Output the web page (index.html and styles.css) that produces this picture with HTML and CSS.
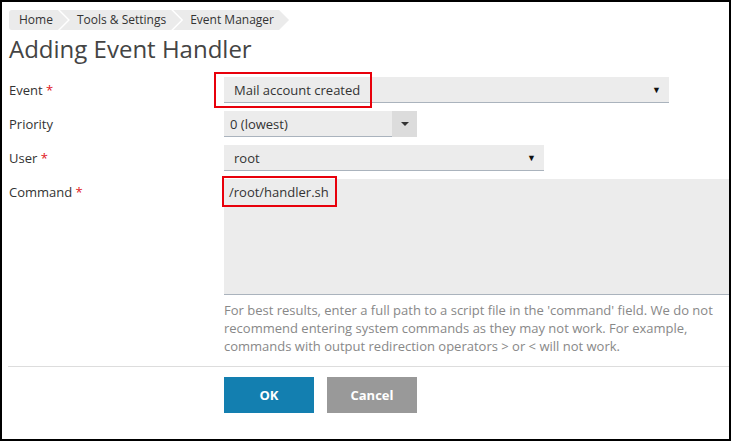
FILE: index.html
```html
<!DOCTYPE html>
<html lang="en">
<head>
  <meta charset="UTF-8">
  <title>Adding Event Handler</title>
  <link rel="stylesheet" href="styles.css">
</head>
<body>
  <div class="page">
    <!-- Breadcrumbs -->
    <ul class="crumbs">
      <li class="crumb">Home</li>
      <li class="crumb">Tools &amp; Settings</li>
      <li class="crumb">Event Manager</li>
    </ul>

    <h1 class="title">Adding Event Handler</h1>

    <form class="form">
      <div class="row">
        <div class="label">Event <span class="req">*</span></div>
        <div class="select select-event">
          <span>Mail account created</span>
          <span class="arrow">&#9660;</span>
          <span class="mark mark-event"></span>
        </div>
      </div>

      <div class="row">
        <div class="label">Priority</div>
        <div class="select select-priority">
          <span>0 (lowest)</span>
          <span class="drop"><span class="caret"></span></span>
        </div>
      </div>

      <div class="row">
        <div class="label">User <span class="req">*</span></div>
        <div class="select select-user">
          <span>root</span>
          <span class="arrow">&#9660;</span>
        </div>
      </div>

      <div class="row">
        <div class="label">Command <span class="req">*</span></div>
        <div class="field">
          <div class="textarea">
            /root/handler.sh
            <span class="mark mark-command"></span>
          </div>
          <p class="hint">For best results, enter a full path to a script file in the 'command' field. We do not recommend entering system commands as they may not work. For example, commands with output redirection operators &gt; or &lt; will not work.</p>
        </div>
      </div>

      <div class="buttons">
        <button type="button" class="btn btn-ok">OK</button>
        <button type="button" class="btn btn-cancel">Cancel</button>
      </div>
    </form>
  </div>
</body>
</html>
```

FILE: styles.css
```css
html {
  font-family: "Open Sans", "Liberation Sans", sans-serif;
  font-size: 13px;
  color: #333;
}
body {
  margin: 0;
}
.page {
  width: 731px;
  height: 441px;
  box-sizing: border-box;
  border: 2px solid #000;
  padding: 8px 0 0 7px;
  overflow: hidden;
  background: #fff;
}

/* Breadcrumbs */
.crumbs {
  display: flex;
  list-style: none;
  margin: 0;
  padding: 0;
  height: 20px;
  font-size: 12px;
}
.crumb {
  height: 20px;
  line-height: 20px;
  background: #ebebeb;
  color: #333;
  padding: 0 15px 0 17px;
  margin-left: -8px;
  clip-path: polygon(0 0, calc(100% - 10px) 0, 100% 50%, calc(100% - 10px) 100%, 0 100%, 10px 50%);
}
.crumb:first-child {
  margin-left: 0;
  padding-left: 10px;
  border-radius: 3px 0 0 3px;
  clip-path: polygon(0 0, calc(100% - 10px) 0, 100% 50%, calc(100% - 10px) 100%, 0 100%);
}

.title {
  margin: 4px 0 0;
  font-size: 24px;
  line-height: 30px;
  font-weight: 400;
  color: #444;
}

/* Form */
.form {
  margin-top: 13px;
}
.row {
  display: flex;
  align-items: flex-start;
  margin-bottom: 8px;
}
.label {
  width: 215px;
  flex: 0 0 215px;
  line-height: 26px;
}
.req {
  color: #e0161b;
}
.select {
  position: relative;
  display: flex;
  align-items: center;
  justify-content: space-between;
  height: 26px;
  box-sizing: border-box;
  background: #ececec;
  border-bottom: 1px solid #aab3bd;
  padding: 0 8px 0 10px;
}
.select-event {
  width: 445px;
}
.select-user {
  width: 320px;
}
.select-priority {
  width: 193px;
  padding: 0 0 0 6px;
  border-bottom: none;
  background: none;
}
.select-priority > span:first-child {
  flex: 1;
  height: 26px;
  line-height: 26px;
  box-sizing: border-box;
  margin-left: -6px;
  padding-left: 6px;
  background: #ececec;
  border-bottom: 1px solid #aab3bd;
}
.arrow {
  font-size: 9px;
  color: #111;
}
.drop {
  width: 25px;
  height: 26px;
  background: #dcdcdc;
  display: flex;
  align-items: center;
  justify-content: center;
}
.caret {
  width: 0;
  height: 0;
  border-left: 4px solid transparent;
  border-right: 4px solid transparent;
  border-top: 4px solid #333;
}

.field {
  flex: 1;
}
.textarea {
  position: relative;
  height: 116px;
  box-sizing: border-box;
  background: #ececec;
  border-bottom: 1px solid #aab3bd;
  padding: 3px 0 0 5px;
  line-height: 20px;
}
.hint {
  margin: 6px 0 0;
  width: 500px;
  line-height: 18px;
  color: #888;
}

/* red annotation boxes */
.mark {
  position: absolute;
  border: 2px solid #e8000b;
  box-sizing: border-box;
  pointer-events: none;
}
.mark-event {
  left: -10px;
  top: -5px;
  width: 158px;
  height: 36px;
}
.mark-command {
  left: -2px;
  top: -3px;
  width: 115px;
  height: 31px;
}

/* Buttons */
.buttons {
  display: flex;
  gap: 13px;
  margin: 11px 0 0 -1px;
  padding: 10px 0 0 216px;
  border-top: 1px solid #ddd;
}
.btn {
  width: 90px;
  height: 36px;
  border: none;
  color: #fff;
  font-family: "Open Sans", sans-serif;
  font-weight: 700;
  font-size: 13px;
  cursor: pointer;
}
.btn-ok {
  background: #137fb0;
}
.btn-cancel {
  background: #999;
}
```
